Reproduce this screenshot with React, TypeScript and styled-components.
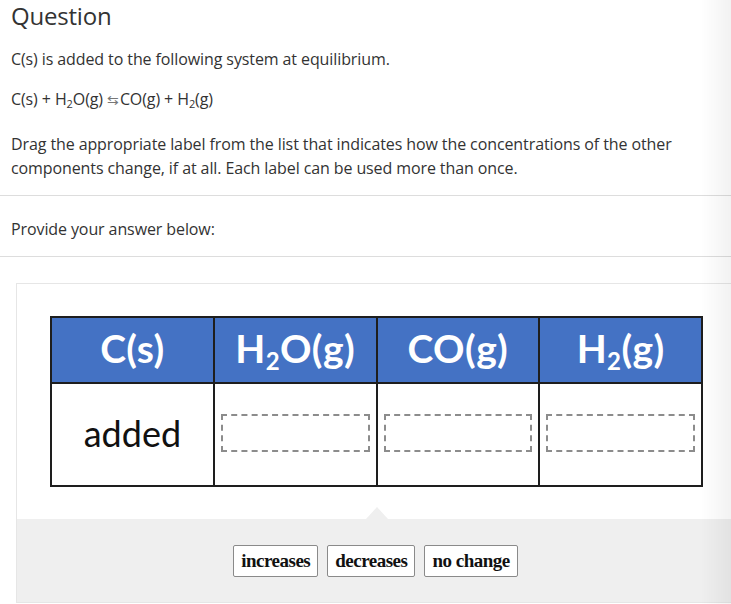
import React from 'react';
import styled, { createGlobalStyle } from 'styled-components';

const GlobalStyle = createGlobalStyle`
  html, body {
    margin: 0;
    padding: 0;
    background: #ffffff;
    overflow: hidden;
  }
  body {
    font-family: "Open Sans", "Liberation Sans", sans-serif;
    color: #333333;
  }
`;

const Page = styled.div`
  width: 731px;
  min-height: 604px;
  overflow: hidden;
  position: relative;
`;

const EdgeShade = styled.div`
  position: fixed;
  top: 0;
  right: 0;
  width: 30px;
  height: 100%;
  pointer-events: none;
  background: linear-gradient(90deg, rgba(0, 0, 0, 0), rgba(0, 0, 0, 0.05));
`;

const Section = styled.div`
  padding: 0 11px;
`;

const Title = styled.h2`
  margin: 0;
  padding-top: 1px;
  font-size: 24px;
  font-weight: 400;
  line-height: 30px;
  color: #333333;
  letter-spacing: -0.2px;
`;

const Text = styled.p<{ $top: number }>`
  margin: ${p => p.$top}px 0 0;
  font-size: 16px;
  line-height: 24px;
  color: #333333;
  letter-spacing: -0.1px;
`;

const Sub = styled.sub`
  font-size: 11px;
  vertical-align: -3px;
  line-height: 0;
`;

const Arrow = styled.span`
  font-size: 14px;
  color: #777777;
  margin: 0 1px 0 4px;
`;

const Divider = styled.hr<{ $top: number }>`
  border: none;
  border-top: 1px solid #dddddd;
  margin: ${p => p.$top}px 0 0;
`;

const Panel = styled.div`
  margin: 26px 0 0 16px;
  width: 719px;
  border: 1px solid #e6e6e6;
  box-sizing: border-box;
`;

const Canvas = styled.div`
  background: #ffffff;
  padding: 32px 0 32px 33px;
`;

const Table = styled.table`
  border-collapse: collapse;
  width: 653px;
  table-layout: fixed;
  font-family: Lato, "Open Sans", sans-serif;
`;

const HeadCell = styled.th`
  height: 60px;
  background: #4472c4;
  border: 2px solid #1e1e1e;
  color: #ffffff;
  font-size: 39px;
  font-weight: 700;
  text-align: center;
  padding: 0 0 4px;
  letter-spacing: 0.4px;
  line-height: 1;
`;

const HeadSub = styled.sub`
  font-size: 24px;
  vertical-align: -7px;
  line-height: 0;
`;

const BodyCell = styled.td`
  height: 97px;
  border: 2px solid #1e1e1e;
  text-align: center;
  vertical-align: middle;
  font-size: 36px;
  line-height: 1;
  color: #111111;
  padding: 0 6px 4px;
`;

const DropZone = styled.div`
  height: 34px;
  border: 2px dashed #8c8c8c;
  box-sizing: content-box;
`;

const Tray = styled.div`
  position: relative;
  background: #efefef;
  height: 83px;
  display: flex;
  align-items: center;
  justify-content: center;
  gap: 9px;
  padding-top: 1px;
  box-sizing: border-box;
  &::before {
    content: '';
    position: absolute;
    top: -12px;
    left: 349px;
    border-left: 11px solid transparent;
    border-right: 11px solid transparent;
    border-bottom: 12px solid #efefef;
  }
`;

const Chip = styled.button`
  height: 32px;
  padding: 0 7px;
  background: #ffffff;
  border: 1px solid #8a8a8a;
  border-radius: 2px;
  font-family: "Liberation Serif", "Times New Roman", serif;
  font-weight: 700;
  font-size: 19px;
  color: #111111;
  letter-spacing: -0.5px;
  cursor: grab;
`;

const columns = [
  { key: 'c', head: <>C(s)</> },
  { key: 'h2o', head: <>H<HeadSub>2</HeadSub>O(g)</> },
  { key: 'co', head: <>CO(g)</> },
  { key: 'h2', head: <>H<HeadSub>2</HeadSub>(g)</> },
];

const labels = ['increases', 'decreases', 'no change'];

export default function App() {
  return (
    <Page>
      <GlobalStyle />
      <Section>
        <Title>Question</Title>
        <Text $top={16}>C(s) is added to the following system at equilibrium.</Text>
        <Text $top={16}>
          C(s) + H<Sub>2</Sub>O(g)<Arrow>⇆</Arrow>CO(g) + H<Sub>2</Sub>(g)
        </Text>
        <Text $top={20}>
          Drag the appropriate label from the list that indicates how the concentrations of the other
          components change, if at all. Each label can be used more than once.
        </Text>
      </Section>
      <Divider $top={15} />
      <Section>
        <Text $top={21}>Provide your answer below:</Text>
      </Section>
      <Divider $top={15} />
      <Panel>
        <Canvas>
          <Table>
            <thead>
              <tr>
                {columns.map(c => (
                  <HeadCell key={c.key}>{c.head}</HeadCell>
                ))}
              </tr>
            </thead>
            <tbody>
              <tr>
                <BodyCell>added</BodyCell>
                <BodyCell><DropZone /></BodyCell>
                <BodyCell><DropZone /></BodyCell>
                <BodyCell><DropZone /></BodyCell>
              </tr>
            </tbody>
          </Table>
        </Canvas>
        <Tray>
          {labels.map(l => (
            <Chip key={l}>{l}</Chip>
          ))}
        </Tray>
      </Panel>
      <EdgeShade />
    </Page>
  );
}
